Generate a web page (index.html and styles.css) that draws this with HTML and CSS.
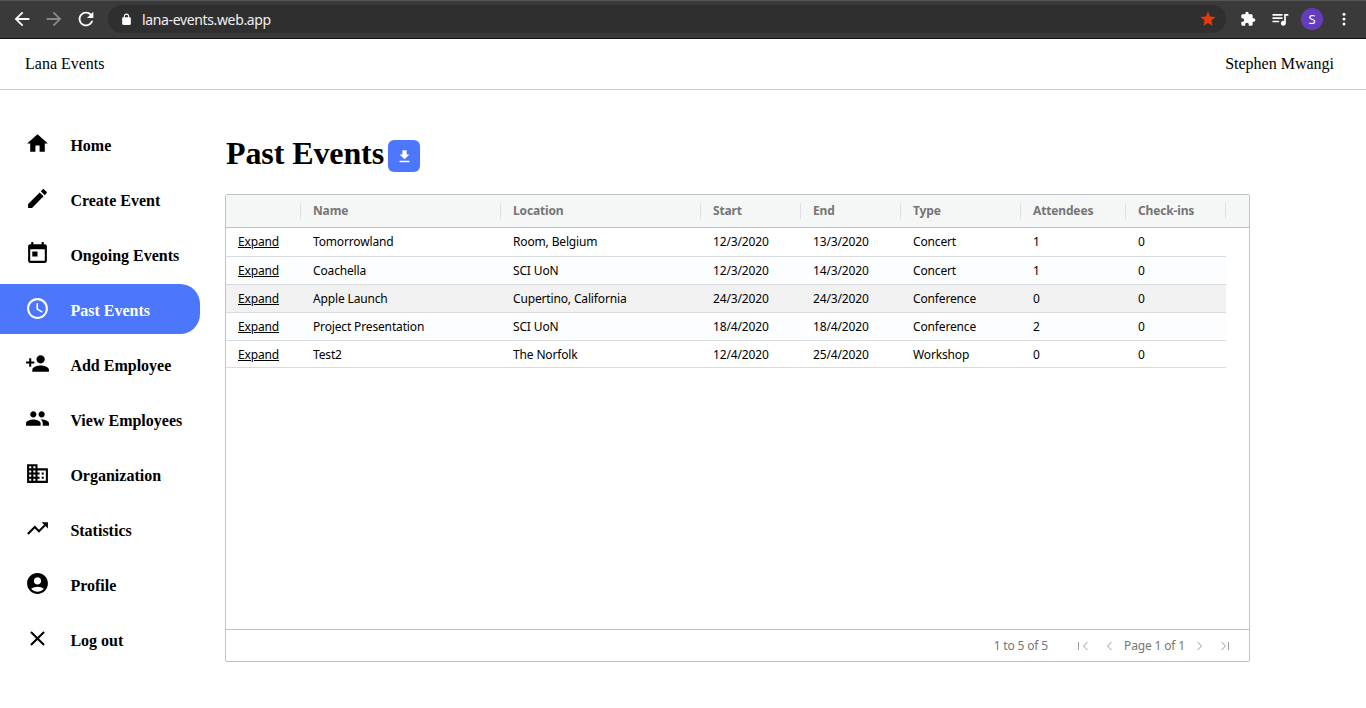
FILE: index.html
```html
<!DOCTYPE html>
<html>
<head>
  <title>Past Events</title>
  <link rel="stylesheet" href="styles.css">
</head>
<body>
  <div class="browser-bar">
    <div class="browser-nav">
      <svg class="bar-icon" viewBox="0 0 24 24"><path d="M20 11H7.83l5.59-5.59L12 4l-8 8 8 8 1.41-1.41L7.83 13H20v-2z"/></svg>
      <svg class="bar-icon dim" viewBox="0 0 24 24"><path d="M12 4l-1.41 1.41L16.17 11H4v2h12.17l-5.58 5.59L12 20l8-8z"/></svg>
      <svg class="bar-icon" viewBox="0 0 24 24"><path d="M17.65 6.35C16.2 4.9 14.21 4 12 4c-4.42 0-7.99 3.58-7.99 8s3.57 8 7.99 8c3.73 0 6.84-2.55 7.73-6h-2.08c-.82 2.33-3.04 4-5.65 4-3.31 0-6-2.69-6-6s2.69-6 6-6c1.66 0 3.14.69 4.22 1.78L13 11h7V4l-2.35 2.35z"/></svg>
    </div>
    <div class="address">
      <svg class="lock" viewBox="0 0 24 24"><path d="M18 8h-1V6c0-2.76-2.24-5-5-5S7 3.24 7 6v2H6c-1.1 0-2 .9-2 2v10c0 1.1.9 2 2 2h12c1.1 0 2-.9 2-2V10c0-1.1-.9-2-2-2zM9 6c0-1.66 1.34-3 3-3s3 1.34 3 3v2H9V6z"/></svg>
      <span class="url">lana-events.web.app</span>
      <svg class="star" viewBox="0 0 24 24"><path d="M12 17.27L18.18 21l-1.63-7.03L22 9.24l-7.19-.61L12 2 9.19 8.63 2 9.24l5.46 4.73L5.82 21z"/></svg>
    </div>
    <div class="browser-tools">
      <svg class="bar-icon puzzle" viewBox="0 0 24 24"><path d="M20.5 11H19V7c0-1.1-.9-2-2-2h-4V3.5C13 2.12 11.88 1 10.5 1S8 2.12 8 3.5V5H4c-1.1 0-1.99.9-1.99 2v3.8H3.5c1.49 0 2.7 1.21 2.7 2.7s-1.21 2.7-2.7 2.7H2V20c0 1.1.9 2 2 2h3.8v-1.5c0-1.49 1.21-2.7 2.7-2.7 1.49 0 2.7 1.21 2.7 2.7V22H17c1.1 0 2-.9 2-2v-4h1.5c1.38 0 2.5-1.12 2.5-2.5S21.88 11 20.5 11z"/></svg>
      <svg class="bar-icon queue" viewBox="0 0 24 24"><path d="M15 6H3v2h12V6zm0 4H3v2h12v-2zM3 16h8v-2H3v2zM17 6v8.18c-.31-.11-.65-.18-1-.18-1.66 0-3 1.34-3 3s1.34 3 3 3 3-1.34 3-3V8h3V6h-5z"/></svg>
      <span class="avatar">S</span>
      <svg class="bar-icon small" viewBox="0 0 24 24"><circle cx="12" cy="5.5" r="2"/><circle cx="12" cy="12" r="2"/><circle cx="12" cy="18.5" r="2"/></svg>
    </div>
  </div>

  <header class="topbar">
    <span>Lana Events</span>
    <span>Stephen Mwangi</span>
  </header>

  <div class="layout">
    <nav class="sidebar">
      <a class="nav-item"><svg class="nav-icon" viewBox="0 0 24 24"><path d="M10 20v-6h4v6h5v-8h3L12 3 2 12h3v8z"/></svg>Home</a>
      <a class="nav-item"><svg class="nav-icon" viewBox="0 0 24 24"><path d="M3 17.25V21h3.75L17.81 9.94l-3.75-3.75L3 17.25zM20.71 7.04c.39-.39.39-1.02 0-1.41l-2.34-2.34c-.39-.39-1.02-.39-1.41 0l-1.83 1.83 3.75 3.75 1.83-1.83z"/></svg>Create Event</a>
      <a class="nav-item"><svg class="nav-icon" viewBox="0 0 24 24"><path d="M19 3h-1V1h-2v2H8V1H6v2H5c-1.11 0-1.99.9-1.99 2L3 19c0 1.1.89 2 2 2h14c1.1 0 2-.9 2-2V5c0-1.1-.9-2-2-2zm0 16H5V8h14v11zM7 10h5v5H7z"/></svg>Ongoing Events</a>
      <a class="nav-item active"><svg class="nav-icon" viewBox="0 0 24 24"><path d="M11.99 2C6.47 2 2 6.48 2 12s4.47 10 9.99 10C17.52 22 22 17.52 22 12S17.52 2 11.99 2zM12 20c-4.42 0-8-3.58-8-8s3.58-8 8-8 8 3.58 8 8-3.58 8-8 8z"/><path d="M12.5 7H11v6l5.25 3.15.75-1.23-4.5-2.67z"/></svg>Past Events</a>
      <a class="nav-item"><svg class="nav-icon" viewBox="0 0 24 24"><path d="M15 12c2.21 0 4-1.79 4-4s-1.79-4-4-4-4 1.79-4 4 1.79 4 4 4zm-9-2V7H4v3H1v2h3v3h2v-3h3v-2H6zm9 4c-2.67 0-8 1.34-8 4v2h16v-2c0-2.66-5.33-4-8-4z"/></svg>Add Employee</a>
      <a class="nav-item"><svg class="nav-icon" viewBox="0 0 24 24"><path d="M16 11c1.66 0 2.99-1.34 2.99-3S17.66 5 16 5c-1.66 0-3 1.34-3 3s1.34 3 3 3zm-8 0c1.66 0 2.99-1.34 2.99-3S9.66 5 8 5C6.34 5 5 6.34 5 8s1.34 3 3 3zm0 2c-2.33 0-7 1.17-7 3.5V19h14v-2.5c0-2.33-4.67-3.5-7-3.5zm8 0c-.29 0-.62.02-.97.05 1.16.84 1.97 1.97 1.97 3.45V19h6v-2.5c0-2.33-4.67-3.5-7-3.5z"/></svg>View Employees</a>
      <a class="nav-item"><svg class="nav-icon" viewBox="0 0 24 24"><path d="M12 7V3H2v18h20V7H12zM6 19H4v-2h2v2zm0-4H4v-2h2v2zm0-4H4V9h2v2zm0-4H4V5h2v2zm4 12H8v-2h2v2zm0-4H8v-2h2v2zm0-4H8V9h2v2zm0-4H8V5h2v2zm10 12h-8v-2h2v-2h-2v-2h2v-2h-2V9h8v10zm-2-8h-2v2h2v-2zm0 4h-2v2h2v-2z"/></svg>Organization</a>
      <a class="nav-item"><svg class="nav-icon" viewBox="0 0 24 24"><path d="M16 6l2.29 2.29-4.88 4.88-4-4L2 16.59 3.41 18l6-6 4 4 6.3-6.29L22 12V6z"/></svg>Statistics</a>
      <a class="nav-item"><svg class="nav-icon" viewBox="0 0 24 24"><path d="M12 2C6.48 2 2 6.48 2 12s4.48 10 10 10 10-4.48 10-10S17.52 2 12 2zm0 4c1.93 0 3.5 1.57 3.5 3.5S13.93 13 12 13s-3.5-1.57-3.5-3.5S10.07 6 12 6zm0 14c-2.03 0-4.43-.82-6.14-2.88C7.55 15.8 9.68 15 12 15s4.45.8 6.14 2.12C16.43 19.18 14.03 20 12 20z"/></svg>Profile</a>
      <a class="nav-item"><svg class="nav-icon" viewBox="0 0 24 24"><path d="M19 6.41L17.59 5 12 10.59 6.41 5 5 6.41 10.59 12 5 17.59 6.41 19 12 13.41 17.59 19 19 17.59 13.41 12z"/></svg>Log out</a>
    </nav>

    <main class="content">
      <div class="title-row">
        <h1>Past Events</h1>
        <button class="download" type="button"><svg viewBox="0 0 24 24"><path d="M19 9h-4V3H9v6H5l7 7 7-7zM5 18v2h14v-2H5z"/></svg></button>
      </div>

      <div class="grid">
        <div class="grid-head cols">
          <div></div>
          <div>Name</div>
          <div>Location</div>
          <div>Start</div>
          <div>End</div>
          <div>Type</div>
          <div>Attendees</div>
          <div>Check-ins</div>
        </div>
        <div class="grid-body">
          <div class="row cols first">
            <div><a class="expand">Expand</a></div><div>Tomorrowland</div><div>Room, Belgium</div><div>12/3/2020</div><div>13/3/2020</div><div>Concert</div><div>1</div><div>0</div>
          </div>
          <div class="row cols odd">
            <div><a class="expand">Expand</a></div><div>Coachella</div><div>SCI UoN</div><div>12/3/2020</div><div>14/3/2020</div><div>Concert</div><div>1</div><div>0</div>
          </div>
          <div class="row cols hover">
            <div><a class="expand">Expand</a></div><div>Apple Launch</div><div>Cupertino, California</div><div>24/3/2020</div><div>24/3/2020</div><div>Conference</div><div>0</div><div>0</div>
          </div>
          <div class="row cols odd">
            <div><a class="expand">Expand</a></div><div>Project Presentation</div><div>SCI UoN</div><div>18/4/2020</div><div>18/4/2020</div><div>Conference</div><div>2</div><div>0</div>
          </div>
          <div class="row cols last">
            <div><a class="expand">Expand</a></div><div>Test2</div><div>The Norfolk</div><div>12/4/2020</div><div>25/4/2020</div><div>Workshop</div><div>0</div><div>0</div>
          </div>
        </div>
        <div class="grid-foot">
          <span class="count">1 to 5 of 5</span>
          <svg class="pager" viewBox="0 0 12 12"><path d="M0.5 2v8M9.5 2l-4 4 4 4"/></svg>
          <svg class="pager" viewBox="0 0 12 12"><path d="M9.5 2l-4 4 4 4"/></svg>
          <span class="page">Page 1 of 1</span>
          <svg class="pager" viewBox="0 0 12 12"><path d="M2.5 2l4 4-4 4"/></svg>
          <svg class="pager" viewBox="0 0 12 12"><path d="M2.5 2l4 4-4 4M9.5 2v8"/></svg>
        </div>
      </div>
    </main>
  </div>
</body>
</html>
```

FILE: styles.css
```css
html, body {
  margin: 0;
  padding: 0;
  height: 100%;
  overflow: hidden;
}
body {
  background-color: #fff;
  color: #000;
  font-family: "Liberation Serif", serif;
  font-size: 16px;
}

/* browser chrome */
.browser-bar {
  box-sizing: border-box;
  height: 39px;
  background-color: #3a3a3a;
  border-top: 1px solid #555;
  border-bottom: 1px solid #111;
  display: flex;
  align-items: center;
  padding-bottom: 1px;
  font-family: "Noto Sans", sans-serif;
}
.browser-nav {
  display: flex;
  align-items: center;
  gap: 10px;
  width: 108px;
  padding-left: 11px;
  box-sizing: border-box;
  flex: none;
}
.bar-icon {
  width: 22px;
  height: 22px;
  fill: #fff;
  flex: none;
}
.bar-icon.dim {
  fill: #8a8a8a;
}
.bar-icon.small {
  width: 18px;
  height: 18px;
}
.bar-icon.puzzle {
  width: 16px;
  height: 16px;
}
.bar-icon.queue {
  width: 20px;
  height: 20px;
  margin-left: 2px;
}
.address {
  width: 1118px;
  height: 28px;
  background-color: #2f2f2f;
  border-radius: 14px;
  display: flex;
  align-items: center;
  box-sizing: border-box;
  padding: 0 9px 0 12px;
  flex: none;
}
.lock {
  width: 13px;
  height: 13px;
  fill: #fff;
  margin-right: 9px;
}
.url {
  color: #f0f0f0;
  font-size: 14px;
  flex: 1;
  letter-spacing: -0.36px;
}
.star {
  width: 18px;
  height: 18px;
  fill: #e8380d;
}
.browser-tools {
  display: flex;
  align-items: center;
  gap: 12px;
  padding-left: 14px;
}
.avatar {
  width: 22px;
  height: 22px;
  margin-left: -1px;
  border-radius: 50%;
  background-color: #633dbd;
  color: #fff;
  font-size: 13px;
  display: flex;
  align-items: center;
  justify-content: center;
  flex: none;
}

/* page header */
.topbar {
  height: 50px;
  border-bottom: 1px solid #ccc;
  display: flex;
  justify-content: space-between;
  align-items: center;
  padding: 0 32px 0 25px;
}

.layout {
  display: flex;
}

/* sidebar */
.sidebar {
  width: 200px;
  padding-top: 29px;
  flex: none;
}
.nav-item {
  display: flex;
  align-items: center;
  gap: 20.4px;
  height: 50px;
  margin-bottom: 5px;
  padding: 4px 0 0 25px;
  box-sizing: border-box;
  font-weight: bold;
  color: #000;
}
.nav-item.active {
  background-color: #4c76fb;
  color: #fff;
  border-radius: 0 20px 20px 0;
}
.nav-icon {
  width: 25px;
  height: 25px;
  fill: currentColor;
  margin-top: -5px;
  flex: none;
}

/* main */
.content {
  padding: 50px 0 0 25px;
}
.title-row {
  display: flex;
  align-items: flex-start;
  gap: 4px;
  height: 32px;
  margin-bottom: 22px;
  padding-left: 1px;
}
h1 {
  margin: -3px 0 0;
  font-size: 32px;
  line-height: 32px;
  font-weight: bold;
  letter-spacing: -0.1px;
}
.download {
  width: 32px;
  height: 32px;
  border: none;
  border-radius: 6px;
  background-color: #4c76fb;
  padding: 0;
  display: flex;
  align-items: center;
  justify-content: center;
}
.download svg {
  width: 17px;
  height: 17px;
  fill: #fff;
}

/* events table */
.grid {
  box-sizing: border-box;
  width: 1025px;
  height: 468px;
  border: 1px solid #bdc3c7;
  border-radius: 2px;
  display: flex;
  flex-direction: column;
  font-family: "Noto Sans", sans-serif;
  font-size: 12px;
  letter-spacing: -0.15px;
}
.cols {
  display: grid;
  grid-template-columns: 75px 200px 200px 100px 100px 120px 105px 100px;
  width: 1000px;
}
.grid-head {
  width: 100%;
  height: 33px;
  box-sizing: border-box;
  background-color: #f5f7f7;
  border-bottom: 1px solid #bdc3c7;
  align-items: center;
  font-weight: bold;
  color: #757575;
}
.grid-head > div {
  box-sizing: border-box;
  height: 16px;
  line-height: 16px;
  padding-left: 12px;
  border-right: 1px solid #dde2e5;
}
.grid-body {
  flex: 1;
}
.row {
  height: 28px;
  box-sizing: border-box;
  border-bottom: 1px solid #d9dcde;
  align-items: center;
}
.row > div {
  padding-left: 12px;
}
.row.first {
  height: 29px;
  padding-bottom: 2px;
}
.row.last {
  height: 27px;
}
.row.odd {
  background-color: #fcfdfe;
}
.row.hover {
  background-color: #f2f2f2;
}
.expand {
  color: #000;
  text-decoration: underline;
}
.grid-foot {
  height: 32px;
  box-sizing: border-box;
  border-top: 1px solid #bdc3c7;
  display: flex;
  align-items: center;
  justify-content: flex-end;
  padding-right: 18px;
  gap: 10px;
  color: #757575;
}
.count {
  margin-right: 20px;
}
.pager {
  width: 12px;
  height: 12px;
  fill: none;
  stroke: #9a9a9a;
  stroke-width: 1;
}
.pager + .pager {
  margin-left: 2px;
}
```
